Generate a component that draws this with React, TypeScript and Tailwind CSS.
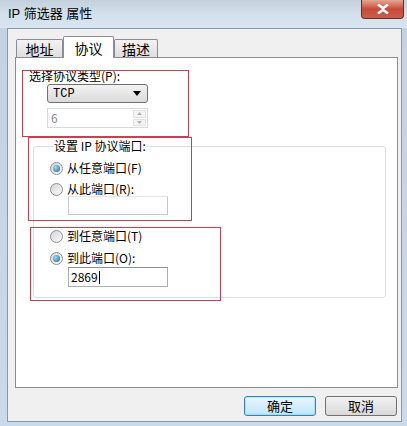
import React from "react";

const Radio = ({ checked, label }: { checked?: boolean; label: string }) => (
  <div className="flex h-[14px] items-center gap-[4px]">
    <span className="flex h-[13px] w-[13px] items-center justify-center rounded-full border border-[#8f8f8f] bg-gradient-to-br from-[#d4d4d4] to-[#fbfbfb]">
      {checked && (
        <span className="h-[7px] w-[7px] rounded-full bg-[radial-gradient(circle_at_35%_35%,#9edcf8,#1f5f8f)]" />
      )}
    </span>
    <span className="leading-[14px]">{label}</span>
  </div>
);

const Tab = ({ label, active, w }: { label: string; active?: boolean; w: string }) =>
  active ? (
    <div className={`relative z-10 flex h-[22px] items-start justify-center rounded-t-[2px] border border-b-0 border-[#898c95] bg-white pt-[2px] text-[14px] leading-[18px] ${w}`}>
      {label}
    </div>
  ) : (
    <div className={`mb-[1px] flex h-[18px] items-center justify-center rounded-t-[2px] border border-b-0 border-[#898c95] bg-gradient-to-b from-[#f3f3f3] to-[#dedede] text-[14px] leading-[16px] ${w}`}>
      {label}
    </div>
  );

export default function App() {
  return (
    <div className="relative flex h-[426px] w-[407px] flex-col bg-gradient-to-b from-[#c2d2e4] to-[#c9daec] font-['Noto_Sans_CJK_SC',sans-serif] text-[12px] text-black">
      {/* Title bar */}
      <div className="relative flex h-[28px] shrink-0 items-center bg-gradient-to-b from-[#c4d0dc] via-[#d3dfeb] to-[#d9e5f1] pl-[8px]">
        <span className="font-['Liberation_Sans','Noto_Sans_CJK_SC',sans-serif] text-[13px] leading-[16px]">IP 筛选器 属性</span>
        <div className="absolute right-[3px] top-0 flex h-[19px] w-[43px] items-center justify-center rounded-b-[4px] border border-t-0 border-[#6d2b25] bg-gradient-to-b from-[#e5a594] via-[#c9493a] to-[#c7604e]">
          <svg width="12" height="10" viewBox="0 0 12 10">
            <path d="M1 0.5L6 4.2L11 0.5M1 9.5L6 5.8L11 9.5" stroke="#fff" strokeWidth="2.6" fill="none" />
          </svg>
        </div>
      </div>

      {/* Client area */}
      <div className="mb-[4px] ml-[7px] mr-[5px] flex flex-1 flex-col border border-[#8798ad] bg-[#f0f0f0]">
        <div className="ml-[7px] mt-[7px] flex flex-col">
          <div className="-mb-px flex h-[22px] items-end pl-[1px]">
            <Tab label="地址" w="w-[47px]" />
            <Tab label="协议" active w="w-[51px]" />
            <Tab label="描述" w="w-[44px]" />
          </div>
          <div className="flex h-[331px] w-[383px] flex-col border border-[#898c95] bg-white">
            <div className="ml-[13px] mt-[11px] leading-[14px]">选择协议类型(P):</div>
            <div className="ml-[31px] mt-[1px] flex h-[19px] w-[101px] items-center justify-between rounded-[3px] border border-[#707070] bg-gradient-to-b from-[#f3f3f3] to-[#dadada] pl-[5px] pr-[6px]">
              <span className="font-['Liberation_Mono',monospace] text-[12px]">TCP</span>
              <svg width="8" height="5" viewBox="0 0 8 5">
                <path d="M0 0h8L4 5z" fill="#000" />
              </svg>
            </div>
            <div className="ml-[31px] mt-[5px] flex h-[20px] w-[101px] items-stretch border border-[#d9d9d9] bg-white">
              <span className="flex-1 pl-[3px] leading-[18px] text-[#8a8a8a]">6</span>
              <div className="flex w-[15px] flex-col gap-[1px] p-[1px]">
                <div className="flex flex-1 items-center justify-center rounded-[1px] border border-[#e0e0e0] bg-[#f4f4f4]">
                  <svg width="5" height="3" viewBox="0 0 5 3"><path d="M0 3L2.5 0L5 3z" fill="#b0b0b0" /></svg>
                </div>
                <div className="flex flex-1 items-center justify-center rounded-[1px] border border-[#e0e0e0] bg-[#f4f4f4]">
                  <svg width="5" height="3" viewBox="0 0 5 3"><path d="M0 0h5L2.5 3z" fill="#b0b0b0" /></svg>
                </div>
              </div>
            </div>

            <fieldset className="ml-[17px] mt-[11px] w-[353px] rounded-[3px] border border-[#d5dfe5] pb-[10px] pl-[16px]">
              <legend className="ml-[3px] px-[1px] leading-[14px]">设置 IP 协议端口:</legend>
              <div className="mt-[8px]">
                <Radio checked label="从任意端口(F)" />
              </div>
              <div className="mt-[7px]">
                <Radio label="从此端口(R):" />
              </div>
              <div className="ml-[18px] h-[19px] w-[100px] border border-[#c9c9c9] border-t-[#e6e6e6] bg-white" />
              <div className="mt-[14px]">
                <Radio label="到任意端口(T)" />
              </div>
              <div className="mt-[8px]">
                <Radio checked label="到此端口(O):" />
              </div>
              <div className="ml-[18px] mt-[2px] flex h-[20px] w-[100px] items-center border border-[#abadb3] border-t-[#8c8f94] bg-white pl-[2px]">
                <span className="leading-[14px]">2869</span>
                <span className="ml-[1px] h-[13px] w-px bg-black" />
              </div>
            </fieldset>
          </div>
        </div>

        {/* Buttons */}
        <div className="mr-[4px] mt-[8px] flex justify-end gap-[9px]">
          <button className="h-[20px] w-[72px] rounded-[3px] border border-[#3c7fb1] bg-gradient-to-b from-[#eaf6fd] to-[#bee6fd] text-[13px] leading-[16px] shadow-[inset_0_0_0_1px_#48d1ff55]">
            确定
          </button>
          <button className="h-[20px] w-[72px] rounded-[3px] border border-[#707070] bg-gradient-to-b from-[#f2f2f2] to-[#d9d9d9] text-[13px] leading-[16px]">
            取消
          </button>
        </div>
      </div>

      {/* red annotation boxes */}
      <div className="pointer-events-none absolute left-[22px] top-[70px] h-[67px] w-[167px] border border-[#c8404f]" />
      <div className="pointer-events-none absolute left-[28px] top-[137px] h-[84px] w-[164px] border border-[#c8404f]" />
      <div className="pointer-events-none absolute left-[30px] top-[227px] h-[74px] w-[191px] border border-[#c8404f]" />
    </div>
  );
}
